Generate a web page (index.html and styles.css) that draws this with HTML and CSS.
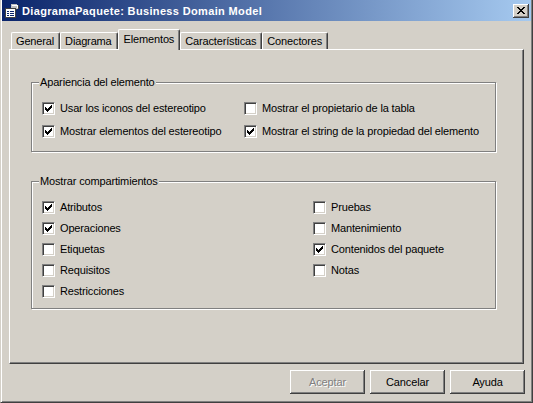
FILE: index.html
```html
<!DOCTYPE html>
<html lang="es">
<head>
<meta charset="utf-8">
<title>DiagramaPaquete: Business Domain Model</title>
<link rel="stylesheet" href="styles.css">
</head>
<body>
<div class="window">
  <div class="titlebar">
    <svg class="app-icon" width="16" height="16" viewBox="0 0 16 16" shape-rendering="crispEdges">
      <path d="M7 1h6v1h2v4h-2v1H7z" fill="#C0C0C0"/>
      <path d="M8 2h5v1H8z M13 2h1v3h-1z" fill="#FFFFFF"/>
      <path d="M7 6h6v1H7z M14 2h1v4h-1z" fill="#404040"/>
      <rect x="1" y="5" width="11" height="10" fill="#FFFFFF"/>
      <path d="M1 5h11v1H1z M1 5h1v10H1z M11 5h1v10h-1z M1 14h11v1H1z" fill="#404040"/>
      <path d="M3 8h2v1H3z M6 8h4v1H6z M3 10h2v1H3z M6 10h4v1H6z M3 12h2v1H3z M6 12h4v1H6z" fill="#0A246A"/>
    </svg>
    <span class="title-text">DiagramaPaquete: Business Domain Model</span>
    <button class="close-btn" aria-label="Cerrar">
      <svg width="8" height="7" viewBox="0 0 8 7" shape-rendering="crispEdges"><path d="M0 0h2v1H0z M6 0h2v1H6z M1 1h2v1H1z M5 1h2v1H5z M2 2h4v1H2z M3 3h2v1H3z M2 4h4v1H2z M1 5h2v1H1z M5 5h2v1H5z M0 6h2v1H0z M6 6h2v1H6z" fill="#000"/></svg>
    </button>
  </div>

  <div class="content">
    <div class="tabs">
      <div class="tab">General</div>
      <div class="tab">Diagrama</div>
      <div class="tab active">Elementos</div>
      <div class="tab">Características</div>
      <div class="tab">Conectores</div>
    </div>

    <div class="panel">
      <div class="group group-apariencia">
        <span class="group-title">Apariencia del elemento</span>
        <div class="group-cols cols-apariencia">
          <div class="col">
            <label class="cb-row"><span class="cb"><svg class="check" width="7" height="7" viewBox="0 0 7 7" shape-rendering="crispEdges"><path d="M0 2h1v3H0z M1 3h1v3H1z M2 4h1v3H2z M3 3h1v3H3z M4 2h1v3H4z M5 1h1v3H5z M6 0h1v3H6z"/></svg></span><span class="cb-label">Usar los iconos del estereotipo</span></label>
            <label class="cb-row"><span class="cb"><svg class="check" width="7" height="7" viewBox="0 0 7 7" shape-rendering="crispEdges"><path d="M0 2h1v3H0z M1 3h1v3H1z M2 4h1v3H2z M3 3h1v3H3z M4 2h1v3H4z M5 1h1v3H5z M6 0h1v3H6z"/></svg></span><span class="cb-label">Mostrar elementos del estereotipo</span></label>
          </div>
          <div class="col">
            <label class="cb-row"><span class="cb"></span><span class="cb-label">Mostrar el propietario de la tabla</span></label>
            <label class="cb-row"><span class="cb"><svg class="check" width="7" height="7" viewBox="0 0 7 7" shape-rendering="crispEdges"><path d="M0 2h1v3H0z M1 3h1v3H1z M2 4h1v3H2z M3 3h1v3H3z M4 2h1v3H4z M5 1h1v3H5z M6 0h1v3H6z"/></svg></span><span class="cb-label">Mostrar el string de la propiedad del elemento</span></label>
          </div>
        </div>
      </div>

      <div class="group group-compart">
        <span class="group-title">Mostrar compartimientos</span>
        <div class="group-cols cols-compart">
          <div class="col">
            <label class="cb-row"><span class="cb"><svg class="check" width="7" height="7" viewBox="0 0 7 7" shape-rendering="crispEdges"><path d="M0 2h1v3H0z M1 3h1v3H1z M2 4h1v3H2z M3 3h1v3H3z M4 2h1v3H4z M5 1h1v3H5z M6 0h1v3H6z"/></svg></span><span class="cb-label">Atributos</span></label>
            <label class="cb-row"><span class="cb"><svg class="check" width="7" height="7" viewBox="0 0 7 7" shape-rendering="crispEdges"><path d="M0 2h1v3H0z M1 3h1v3H1z M2 4h1v3H2z M3 3h1v3H3z M4 2h1v3H4z M5 1h1v3H5z M6 0h1v3H6z"/></svg></span><span class="cb-label">Operaciones</span></label>
            <label class="cb-row"><span class="cb"></span><span class="cb-label">Etiquetas</span></label>
            <label class="cb-row"><span class="cb"></span><span class="cb-label">Requisitos</span></label>
            <label class="cb-row"><span class="cb"></span><span class="cb-label">Restricciones</span></label>
          </div>
          <div class="col">
            <label class="cb-row"><span class="cb"></span><span class="cb-label">Pruebas</span></label>
            <label class="cb-row"><span class="cb"></span><span class="cb-label">Mantenimiento</span></label>
            <label class="cb-row"><span class="cb"><svg class="check" width="7" height="7" viewBox="0 0 7 7" shape-rendering="crispEdges"><path d="M0 2h1v3H0z M1 3h1v3H1z M2 4h1v3H2z M3 3h1v3H3z M4 2h1v3H4z M5 1h1v3H5z M6 0h1v3H6z"/></svg></span><span class="cb-label">Contenidos del paquete</span></label>
            <label class="cb-row"><span class="cb"></span><span class="cb-label">Notas</span></label>
          </div>
        </div>
      </div>
    </div>

    <div class="buttons">
      <button class="btn disabled">Aceptar</button>
      <button class="btn">Cancelar</button>
      <button class="btn">Ayuda</button>
    </div>
  </div>
</div>
</body>
</html>
```

FILE: styles.css
```css
* { box-sizing: border-box; }
html, body { margin: 0; padding: 0; }
body {
  width: 533px;
  height: 403px;
  overflow: hidden;
  background: #D4D0C8;
  font-family: "Liberation Sans", Arial, sans-serif;
  font-size: 11px;
  letter-spacing: -0.15px;
  color: #000;
}

.window {
  height: 403px;
  display: flex;
  flex-direction: column;
  border-left: 1px solid #D4D0C8;
  border-right: 1px solid #404040;
  border-bottom: 1px solid #404040;
  box-shadow: inset 1px 0 0 #FFFFFF, inset -1px -1px 0 #808080;
  padding: 0 1px;
}

/* Title bar */
.titlebar {
  height: 21px;
  flex: none;
  display: flex;
  align-items: center;
  padding-left: 2px;
  background: linear-gradient(to right, #0A246A, #A6CAF0);
  color: #FFFFFF;
}
.app-icon { flex: none; display: block; }
.title-text {
  margin-left: 2px;
  font-weight: bold;
  letter-spacing: 0.35px;
  white-space: nowrap;
}
.close-btn {
  margin-left: auto;
  margin-right: 2px;
  width: 16px;
  height: 14px;
  padding: 0;
  border: none;
  background: #D4D0C8;
  box-shadow: inset -1px -1px 0 #404040, inset 1px 1px 0 #FFFFFF, inset -2px -2px 0 #808080;
  display: flex;
  align-items: center;
  justify-content: center;
}
.close-btn svg { display: block; }

/* Main content */
.content {
  flex: 1;
  display: flex;
  flex-direction: column;
  padding: 0 7px;
}

.tabs {
  height: 28px;
  flex: none;
  display: flex;
  align-items: flex-end;
  padding-left: 2px;
}
.tab {
  height: 17px;
  padding: 0 5px 0 4px;
  display: flex;
  align-items: center;
  border-top: 1px solid #FFFFFF;
  border-left: 1px solid #FFFFFF;
  border-right: 1px solid #404040;
  box-shadow: inset -1px 0 0 #808080;
  border-top-left-radius: 2px;
  border-top-right-radius: 2px;
  white-space: nowrap;
  background: #D4D0C8;
}
.tab.active {
  height: 21px;
  margin-bottom: -1px;
  padding: 0 5px 2px 5px;
  position: relative;
  z-index: 1;
}

.panel {
  height: 315px;
  flex: none;
  border-top: 1px solid #FFFFFF;
  border-left: 1px solid #FFFFFF;
  border-right: 1px solid #404040;
  border-bottom: 1px solid #404040;
  box-shadow: inset -1px -1px 0 #808080;
  padding: 32px 27px 0 21px;
}

.group {
  position: relative;
  border: 1px solid #808080;
  box-shadow: inset 1px 1px 0 #FFFFFF, 1px 1px 0 #FFFFFF;
}
.group-apariencia { padding: 14px 0 8px 10px; }
.group-compart { margin-top: 29px; padding: 15px 0 6px 10px; }

.group-title {
  position: absolute;
  top: -7px;
  left: 7px;
  padding: 0 1px;
  line-height: 13px;
  background: #D4D0C8;
  white-space: nowrap;
}

.group-cols { display: grid; }
.cols-apariencia { grid-template-columns: 202px 1fr; }
.cols-compart { grid-template-columns: 271px 1fr; }
.col { display: flex; flex-direction: column; }

.cb-row {
  display: flex;
  align-items: center;
  gap: 5px;
  white-space: nowrap;
}
.cols-apariencia .cb-row { height: 23px; }
.cols-compart .cb-row { height: 21px; }
.cb-label { padding-bottom: 2px; }

.cb {
  flex: none;
  width: 13px;
  height: 13px;
  background: #FFFFFF;
  border: 1px solid;
  border-color: #808080 #FFFFFF #FFFFFF #808080;
  box-shadow: inset 1px 1px 0 #404040, inset -1px -1px 0 #D4D0C8;
  display: flex;
  align-items: center;
  justify-content: center;
}
.check { display: block; fill: #000; }

/* Buttons */
.buttons {
  margin-top: 6px;
  margin-right: -1px;
  display: flex;
  justify-content: flex-end;
  gap: 5px;
}
.btn {
  width: 75px;
  height: 24px;
  padding: 0;
  border: none;
  background: #D4D0C8;
  font-family: inherit;
  font-size: 11px;
  letter-spacing: -0.15px;
  color: #000;
  box-shadow: inset -1px -1px 0 #404040, inset 1px 1px 0 #FFFFFF, inset -2px -2px 0 #808080;
}
.btn.disabled {
  color: #808080;
  text-shadow: 1px 1px 0 #FFFFFF;
}
```
